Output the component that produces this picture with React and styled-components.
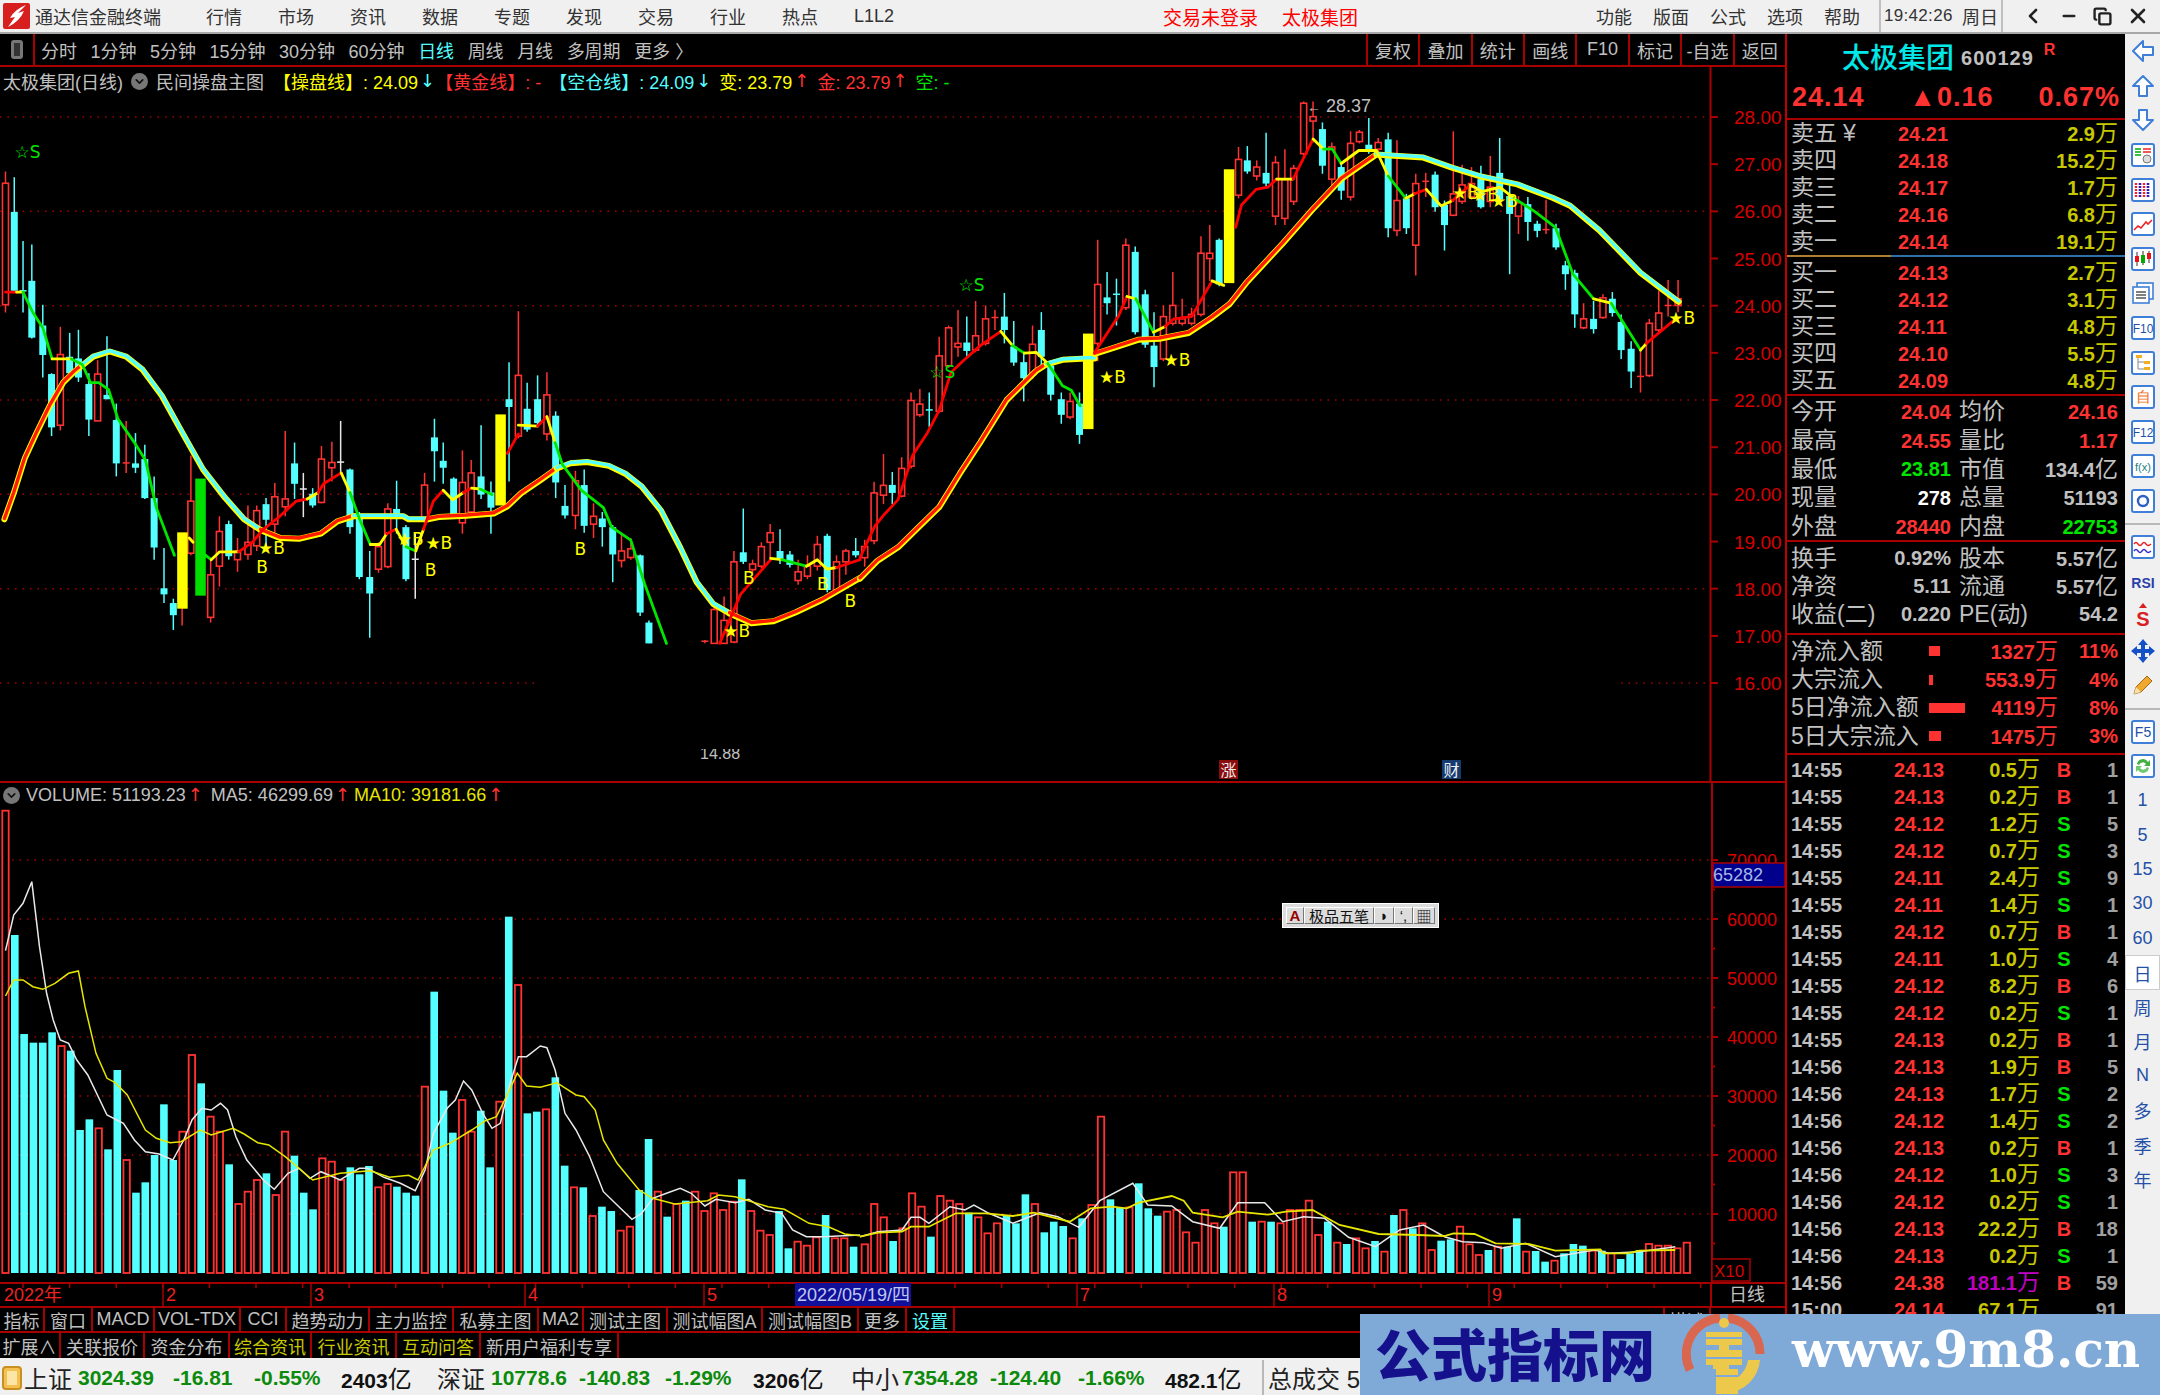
import React from "react";
import styled, { createGlobalStyle } from "styled-components";
import { ChevronLeft, Minus, Copy, X, ChevronDown } from "lucide-react";

const GlobalStyle = createGlobalStyle`
  html, body { margin: 0; padding: 0; background: #000; overflow: hidden; }
`;

const SANS = `"Liberation Sans", "Noto Sans CJK SC", sans-serif`;
const RED = "#ff3232";
const CYAN = "#54ffff";
const LINE = "#a80000";
const YEL = "#ffff00";
const GRN = "#00e600";

// traced from the chart, [x, colour, body top, body bottom, wick top, wick bottom]
const candlesA = [
  [10,"r",192,472,165,490],[26,"c",258,440,178,445],[42,"c",440,446,325,490],[58,"c",417,548,333,550],[78,"c",520,588,472,640],
  [94,"c",632,755,630,775],[110,"r",587,750,523,762],[127,"c",592,630,537,630],[143,"c",596,640,530,650],[162,"c",655,737,630,775],
  [178,"r",632,740,600,740],[195,"c",680,690,545,690],[212,"c",738,838,700,868],[230,"r",837,840,740,860],[247,"c",838,848,768,860],
  [264,"c",828,918,795,920],[281,"c",918,1032,868,1060],[299,"c",1126,1140,1033,1160],[316,"c",1160,1188,1150,1222],[332,"r",1020,1170,1000,1212],
  [348,"r",925,1045,820,1050],[384,"r",1095,1193,1060,1205],[400,"r",995,1075,960,1122],[417,"c",978,1052,970,1060],[433,"r",1040,1060,1010,1088],
  [452,"r",1020,1048,935,1060],[468,"r",947,1028,935,1040],[485,"c",932,968,918,1028],[501,"r",915,978,883,1000],[520,"r",920,938,763,960],
  [537,"c",838,885,790,920],[553,"w",897,899,860,962],[570,"c",908,935,895,940],[586,"r",828,928,798,930],[605,"r",836,848,788,880],
  [621,"w",835,837,740,860],[638,"c",852,985,850,1000],[655,"c",958,1100,950,1105],[674,"c",1100,1138,1040,1240],[690,"r",1030,1082,1020,1090],
  [707,"r",943,1076,930,1080],[723,"c",943,960,878,1000],[740,"c",985,1105,980,1110],[757,"w",1059,1061,1000,1150],[774,"r",888,968,860,980],
  [792,"c",778,810,735,880],[808,"c",832,848,790,885],[827,"c",873,955,870,960],[843,"r",882,975,808,1000],[859,"r",860,950,830,960],
  [877,"c",868,910,750,920],[895,"c",905,940,880,1000],[928,"c",690,708,605,880],[945,"r",635,775,487,780],[961,"c",712,760,652,765],
  [980,"c",690,745,635,750],[997,"r",680,770,628,785],[1013,"c",728,882,718,918],[1030,"c",936,958,888,965],[1049,"r",878,958,855,990],
  [1065,"c",888,982,852,998],[1082,"r",960,978,930,1010],[1098,"c",965,985,950,1030],[1117,"c",985,1048,980,1112],[1133,"r",1040,1062,1000,1078],
  [1150,"r",1035,1055,1010,1060],[1167,"c",1050,1182,1048,1190],[1183,"c",1205,1253,1200,1253],[1285,"r",1248,1253,1245,1253],[1302,"r",1175,1253,1170,1253],
  [1320,"r",1200,1253,1145,1253],[1338,"r",1065,1250,1040,1253],[1355,"c",1043,1065,942,1070],[1372,"r",1070,1083,1060,1090],[1388,"r",1030,1075,1020,1080],
  [1404,"r",998,1020,978,1060],[1422,"c",1040,1060,990,1070],[1440,"c",1048,1072,1040,1078],[1455,"r",1088,1108,1060,1118],[1472,"r",1075,1098,1050,1105],
  [1490,"r",1025,1075,1005,1085],[1508,"c",1005,1130,1000,1135],[1525,"r",1065,1130,1050,1140],[1542,"r",1040,1065,1035,1095],[1560,"c",1040,1050,1010,1055],
];

const candlesB = [
  [8,"r",1045,1070,1030,1090],[24,"r",925,1032,900,1040],[40,"r",908,930,838,950],[55,"c",907,925,878,950],[71,"r",870,932,845,935],
  [87,"r",718,865,700,870],[102,"r",726,750,692,755],[118,"c",739,741,700,778],[135,"r",618,742,575,745],[151,"r",555,640,550,645],
  [167,"r",590,598,515,620],[182,"c",588,607,530,620],[197,"r",573,605,495,610],[214,"r",535,590,505,595],[230,"r",532,535,515,560],
  [246,"c",530,560,477,590],[262,"c",597,633,540,640],[279,"c",632,668,610,720],[294,"r",592,660,550,670],[309,"c",560,620,520,650],
  [325,"c",640,705,630,718],[343,"c",715,750,700,770],[358,"r",720,755,700,760],[374,"c",725,795,700,815],[405,"r",458,590,358,630],
  [421,"c",487,500,430,525],[437,"c",480,485,445,550],[453,"r",370,510,355,515],[469,"c",385,565,373,570],[486,"c",480,593,470,600],
  [501,"c",595,643,520,688],[517,"r",530,625,505,630],[533,"r",505,545,430,550],[549,"r",535,545,490,550],[565,"r",525,545,510,550],
  [581,"r",388,525,350,530],[596,"r",388,400,325,450],[612,"c",358,458,355,462],[645,"r",178,258,150,265],[660,"c",180,205,148,210],
  [676,"r",195,215,180,225],[692,"c",208,232,118,240],[708,"r",185,305,170,325],[724,"r",223,310,155,325],[739,"r",198,272,190,280],
  [756,"r",52,165,48,170],[772,"r",82,92,48,140],[788,"c",110,192,95,210],[804,"r",150,222,140,235],[820,"c",195,248,185,268],
  [836,"r",142,262,115,270],[851,"r",117,138,112,142],[867,"c",145,155,85,165],[883,"r",140,155,130,165],[900,"c",133,332,118,352],
  [915,"r",270,337,135,350],[931,"c",265,332,255,345],[947,"r",232,370,210,438],[964,"r",227,229,208,262],[980,"c",212,285,205,295],
  [996,"c",280,325,270,382],[1011,"r",255,303,115,305],[1026,"r",235,272,190,278],[1042,"r",232,262,195,268],[1058,"c",222,285,192,288],
  [1074,"r",240,272,170,285],[1090,"c",208,268,130,272],[1107,"c",260,300,235,435],[1122,"r",275,305,260,345],[1138,"c",278,318,262,360],
  [1154,"c",322,338,315,352],[1169,"r",335,340,268,345],[1186,"c",332,375,322,380],[1202,"c",415,435,405,470],[1218,"c",432,525,425,555],
  [1233,"r",535,555,500,558],[1250,"c",535,558,495,568],[1266,"r",488,532,480,535],[1282,"c",490,522,475,530],[1297,"c",542,605,525,625],
  [1314,"c",602,653,585,690],[1330,"r",664,666,600,700],[1345,"r",545,662,535,665],[1361,"r",522,560,472,565],[1377,"r",505,507,448,530],
  [1394,"r",490,505,448,520],
];

const ax = (x) => x / 1.823;
const ay = (y) => 100 + y / 2.306;
const bx = (x) => 860 + x / 1.704;
const by = (y) => 80 + y / 2.24;
const priceY = (p) => 117 + (28 - p) * 47.17;

const slowA = [
  ["r",[8,965],[25,905],[45,825],[65,770],[90,705],[115,650],[135,625],[150,610]],
  ["c",[150,610],[170,590],[200,578],[230,590],[260,620],[295,680],[330,760],[370,850],[410,915],[445,965],[475,990]],
  ["r",[475,990],[510,1008],[545,1010],[585,998],[615,970],[645,958]],
  ["c",[645,958],[735,958],[745,965],[780,965]],
  ["r",[780,965],[800,960],[850,957],[900,952],[925,935],[950,905],[985,875],[1015,848]],
  ["c",[1015,848],[1040,836],[1070,833],[1110,842],[1140,860],[1170,890],[1205,945],[1240,1030],[1270,1110],[1300,1160],[1330,1182]],
  ["r",[1330,1182],[1370,1205],[1410,1200],[1450,1180],[1500,1150],[1568,1100]],
];
const slowB = [
  ["r",[0,1115],[30,1075],[65,1045],[100,1000],[135,955],[170,880],[205,810],[250,715],[300,650],[318,635]],
  ["c",[318,635],[345,625],[385,622],[400,622]],
  ["r",[400,612],[440,595],[475,580],[510,578],[560,565],[600,530],[630,500],[660,450],[720,365],[770,290],[820,220],[880,165]],
  ["c",[880,165],[910,168],[960,172],[1010,195],[1060,215],[1120,232],[1180,262],[1210,280],[1260,335],[1330,430],[1395,495]],
];
const thinA = [
  ["r",[10,443],[30,443]],["y",[30,443],[42,443]],
  ["g",[42,443],[60,490],[78,525],[95,597]],["y",[95,597],[130,597]],
  ["g",[130,597],[150,610],[165,652],[180,652],[198,668],[215,735],[245,790],[265,830],[285,940],[318,1050]],
  ["y",[345,1010],[352,1020]],["g",[375,1050],[385,1060]],["y",[385,1060],[400,1042],[435,1042]],
  ["r",[435,1042],[460,1020],[480,990],[510,960],[540,925],[560,920]],["y",[560,920],[580,905]],
  ["r",[580,905],[590,885],[622,860]],["y",[622,860],[638,905]],["g",[638,905],[655,965],[675,1025]],
  ["y",[675,1025],[692,1025],[705,1000]],["r",[705,1000],[722,990]],["y",[722,990],[740,1030]],
  ["g",[740,1030],[758,1040]],["y",[758,1040],[772,990]],["r",[772,990],[790,925],[808,900]],
  ["y",[808,900],[825,922],[845,905]],["r",[845,905],[860,895]],["y",[860,895],[875,897]],["g",[875,897],[897,910]],
  ["r",[925,815],[945,770]],["y",[945,750],[980,752]],["r",[980,752],[997,730]],["y",[997,730],[1012,790]],
  ["g",[1012,790],[1025,840],[1060,900],[1100,940],[1115,985],[1150,1015],[1175,1115],[1215,1253]],
  ["r",[1312,1253],[1350,1140],[1405,1060]],["y",[1405,1057],[1425,1060]],["g",[1425,1060],[1470,1075]],
  ["y",[1470,1075],[1490,1060],[1508,1082],[1525,1078]],["r",[1525,1078],[1568,1060]],
];
const thinB = [
  ["r",[0,1070],[25,1000],[40,975],[65,940],[90,840],[115,790],[135,740],[155,655],[175,630],[205,595],[240,563]],
  ["y",[240,563],[260,595]],["g",[260,595],[280,612]],["y",[280,612],[300,610],[320,635]],
  ["g",[320,635],[345,685],[360,695],[375,730]],["r",[400,610],[440,530],[455,485]],["y",[455,485],[470,490]],
  ["g",[470,490],[500,565]],["y",[500,565],[520,552]],["r",[520,552],[535,535],[565,530],[600,450]],["y",[600,450],[620,460]],
  ["r",[640,330],[650,280],[675,245],[695,240],[710,222]],["y",[710,222],[738,222]],["r",[738,222],[772,132]],
  ["y",[772,132],[790,155]],["g",[790,155],[805,155],[820,187]],["y",[820,187],[850,158],[880,158],[900,215]],
  ["g",[900,215],[930,265]],["y",[930,265],[945,255]],["r",[945,255],[965,245]],["y",[965,245],[990,282],[1010,270]],
  ["r",[1010,270],[1040,235]],["y",[1040,235],[1060,250],[1090,240],[1115,265]],
  ["g",[1115,265],[1150,295],[1185,330],[1215,435],[1250,490]],["y",[1250,490],[1280,500]],["g",[1280,500],[1330,605]],
  ["y",[1330,605],[1340,590]],["r",[1340,590],[1390,535]],
];
const lineColor = { r: "#ff0000", y: YEL, g: GRN, c: CYAN };

const toPts = (pts, fx, fy, dy = 0) => pts.map(([x, y]) => `${fx(x).toFixed(1)},${(fy(y) + dy).toFixed(1)}`).join(" ");

const stars = [
  [ax(50), ay(120), "☆S", GRN], [bx(190), by(460), "☆S", GRN], [bx(140), by(655), "☆S", GRN],
  [ax(495), ay(1032), "★B", YEL], [ax(748), ay(1012), "★B", YEL], [ax(800), ay(1022), "★B", YEL], [ax(1343), ay(1225), "★B", YEL],
  [bx(430), by(665), "★B", YEL], [bx(540), by(628), "★B", YEL], [bx(1400), by(532), "★B", YEL],
  [bx(1032), by(252), "★B", YEL], [bx(1066), by(258), "★B", YEL], [bx(1098), by(272), "★B", YEL],
  [ax(478), ay(1076), "B", YEL], [ax(785), ay(1083), "B", YEL], [ax(1058), ay(1035), "B", YEL],
  [ax(1365), ay(1103), "B", YEL], [ax(1500), ay(1115), "B", YEL], [ax(1550), ay(1155), "B", YEL],
];

const signalBars = [
  [ax(323), ay(997), ay(1173), YEL], [ax(356), ay(873), ay(1143), "#00e000"], [ax(903), ay(725), ay(935), YEL],
  [bx(380), by(568), by(782), YEL], [bx(620), by(200), by(455), YEL],
];

const volA = "r92 c465 c762 c788 c788 c757 r798 c812 c1050 c1018 r1045 c1108 c870 r1140 c1238 c1207 c1125 c973 c1140 r1055 r825 c910 r1010 r1055 c1153 r1272 r1235 r1200 c1180 r1245 r1055 c1127 c1238 c1288 r1135 r1145 r1200 c1162 c1183 c1158 r1222 r1212 c1220 c1238 c1247 r920 c635 c932 c1058 r960 r1055 c992 c1162 r965 c410 r615 c1000 c995 r988 c892 c1157 r1222 c1222 r1308 c1280 c1293 r1352 r1340 c1230 c1077 r1235 c1310 r1272 c1262 r1235 r1293 r1240 r1290 r1265 c1198 r1293 r1352 r1365 c1293 c1405 r1385 r1397 r1372 c1305 r1375 r1375 c1400".split(" ");
const volB = "r1393 r1272 r1312 c1383 r1345 r1240 r1280 c1370 r1248 r1262 r1272 c1298 r1312 r1360 r1330 c1305 c1330 c1243 r1272 c1357 c1325 c1338 r1375 c1315 r1275 r1010 c1258 c1282 r1282 c1210 c1285 c1307 r1295 r1290 r1357 r1388 r1290 r1330 c1340 r1177 r1177 c1325 r1325 c1325 r1330 r1290 r1290 r1262 r1365 c1325 r1388 c1392 r1375 r1405 c1383 r1415 c1305 r1290 c1345 r1330 r1410 c1382 c1378 r1340 r1393 r1425 c1410 r1400 c1400 c1315 r1415 c1413 c1445 r1442 c1420 c1392 c1397 r1412 c1412 r1420 c1437 c1420 c1410 r1392 r1397 r1397 r1405 r1388".split(" ");

const vy = (y) => 780 + y / 3;
const vxA = (x) => x / 1.823;
const vxB = (x) => 860 + x / 1.668;

const ma5A = [[10,512],[25,405],[42,370],[58,305],[72,500],[85,640],[97,720],[110,780],[125,790],[140,840],[160,885],[195,1005],[225,1030],[245,1080],[265,1115],[290,1122],[315,1140],[335,1080],[350,1020],[368,985],[385,990],[402,970],[415,990],[430,1070],[450,1140],[480,1200],[500,1228],[525,1180],[545,1165],[565,1195],[585,1175],[620,1200],[655,1165],[670,1165],[700,1192],[730,1210],[757,1232],[775,1170],[790,1060],[815,985],[830,960],[845,903],[860,930],[880,1000],[897,1045],[912,1030],[930,910],[945,830],[960,830],[985,798],[997,803],[1012,870],[1030,1000],[1050,1050],[1075,1130],[1100,1235],[1125,1275],[1152,1318],[1170,1300],[1190,1255],[1215,1240],[1240,1225],[1260,1240],[1285,1278],[1305,1258],[1340,1268],[1365,1258],[1395,1290],[1425,1300],[1445,1350],[1470,1370],[1500,1370],[1568,1365]];
const ma10A = [[10,648],[25,600],[42,600],[60,620],[78,628],[100,610],[125,580],[143,573],[155,680],[175,820],[195,895],[210,908],[232,945],[265,1050],[285,1075],[310,1088],[330,1085],[365,1050],[385,1065],[425,1045],[445,1062],[470,1088],[490,1095],[520,1130],[570,1200],[620,1180],[675,1172],[710,1192],[745,1186],[762,1200],[790,1110],[820,1090],[860,1050],[885,1022],[905,1010],[920,960],[943,880],[960,918],[985,922],[1015,908],[1050,945],[1065,950],[1085,990],[1100,1080],[1125,1150],[1165,1230],[1190,1255],[1230,1272],[1290,1262],[1310,1245],[1340,1250],[1400,1280],[1430,1288],[1475,1330],[1510,1340],[1540,1362],[1568,1367]];
const ma5B = [[0,1370],[30,1355],[70,1350],[85,1312],[100,1312],[115,1330],[150,1280],[175,1290],[190,1275],[215,1300],[255,1330],[300,1298],[330,1310],[365,1342],[400,1262],[455,1210],[480,1275],[520,1278],[555,1325],[600,1345],[630,1268],[675,1268],[705,1325],[740,1310],[775,1315],[815,1372],[860,1400],[900,1350],[940,1335],[975,1370],[1005,1385],[1040,1388],[1070,1405],[1110,1390],[1160,1430],[1225,1410],[1250,1420],[1300,1415],[1360,1400]];
const ma10B = [[0,1370],[30,1358],[70,1355],[85,1340],[115,1340],[160,1300],[210,1300],[255,1308],[290,1298],[350,1325],[385,1285],[420,1280],[445,1285],[465,1268],[520,1248],[540,1262],[555,1298],[605,1312],[630,1295],[680,1304],[710,1295],[755,1290],[800,1335],[865,1362],[930,1365],[975,1368],[990,1360],[1025,1362],[1060,1390],[1115,1392],[1160,1412],[1235,1408],[1240,1420],[1280,1420],[1300,1412],[1360,1410]];

const Root = styled.div`
  width: 2160px;
  height: 1395px;
  position: relative;
  overflow: hidden;
  display: flex;
  flex-direction: column;
  background: #000;
  font-family: ${SANS};
`;

/* title bar */
const TitleBar = styled.header`
  height: 34px;
  flex: none;
  box-sizing: border-box;
  display: flex;
  align-items: center;
  background: #f0f0f0;
  border-bottom: 2px solid #a8a8a8;
  color: #333;
  font-size: 18px;
`;
const AppName = styled.span`
  margin-left: 5px;
  width: 126px;
  white-space: nowrap;
`;
const MenuGroup = styled.nav`
  display: flex;
  align-items: center;
  margin-left: ${(p) => p.$ml}px;
  gap: ${(p) => p.$gap}px;
  white-space: nowrap;
`;
const AlertText = styled.span`
  color: #ff0000;
  font-size: 19px;
`;
const ClockBox = styled.div`
  margin-left: 19px;
  width: 124px;
  height: 32px;
  box-sizing: border-box;
  border-left: 2px solid #c0c0c0;
  border-right: 2px solid #c0c0c0;
  display: flex;
  align-items: center;
  justify-content: space-between;
  padding: 0 3px;
  white-space: nowrap;
`;
const Clock = styled.span`
  font-size: 17px;
  letter-spacing: 0.3px;
`;
const WindowControls = styled.div`
  flex: 1;
  display: flex;
  align-items: center;
  justify-content: space-around;
  padding: 0 2px 0 10px;
  color: #222;
`;

/* work area */
const Workspace = styled.div`
  flex: 1;
  min-height: 0;
  display: flex;
`;
const ChartColumn = styled.div`
  width: 1785px;
  flex: none;
  display: flex;
  flex-direction: column;
  background: #000;
`;
const Toolbar = styled.div`
  height: 33px;
  flex: none;
  box-sizing: border-box;
  display: flex;
  align-items: center;
  border-bottom: 2px solid ${LINE};
  color: #c0c0c0;
  font-size: 18px;
`;
const PaneButton = styled.div`
  width: 35px;
  height: 100%;
  flex: none;
  box-sizing: border-box;
  display: flex;
  align-items: center;
  justify-content: center;
  border-right: 2px solid ${LINE};
`;
const Toggle = styled.span`
  display: block;
  width: 12px;
  height: 19px;
  box-sizing: border-box;
  border: 3px solid #777;
  border-radius: 3px;
  background: #333;
`;
const PeriodList = styled.div`
  display: flex;
  gap: 13.5px;
  margin-left: 6px;
  white-space: nowrap;
`;
const Period = styled.span`
  color: ${(p) => (p.$active ? CYAN : "#c0c0c0")};
`;
const ToolTabs = styled.div`
  margin-left: auto;
  display: flex;
  height: 100%;
`;
const ToolTab = styled.span`
  width: 52.4px;
  box-sizing: border-box;
  border-left: 2px solid ${LINE};
  display: flex;
  align-items: center;
  justify-content: center;
  white-space: nowrap;
`;

const MainPane = styled.section`
  position: relative;
  height: 714px;
  flex: none;
`;
const ChartSvg = styled.svg`
  display: block;
  font-family: ${SANS};
`;
const LegendBar = styled.div`
  position: absolute;
  left: 3px;
  top: ${(p) => p.$top}px;
  display: flex;
  align-items: center;
  height: 24px;
  font-size: 18px;
  color: #c0c0c0;
  white-space: nowrap;
`;
const LegendText = styled.span`
  color: ${(p) => p.$c || "#c0c0c0"};
  margin-left: ${(p) => p.$ml || 0}px;
`;
const LegendArrow = styled.span`
  color: ${(p) => p.$c};
  font-family: "DejaVu Sans", sans-serif;
  font-size: 18px;
  line-height: 1;
  margin: 0 ${(p) => p.$mr || 0}px 0 2px;
`;
const CircleDrop = styled.span`
  width: 17px;
  height: 17px;
  margin: 0 ${(p) => p.$mr}px 0 ${(p) => p.$ml}px;
  border-radius: 50%;
  background: #777;
  color: #111;
  display: inline-flex;
  align-items: center;
  justify-content: center;
`;
const VolumePane = styled.section`
  position: relative;
  height: 501px;
  box-sizing: border-box;
  flex: none;
  border-top: 2px solid ${LINE};
`;
const ImeBar = styled.div`
  position: absolute;
  left: 1282px;
  top: 120px;
  width: 157px;
  height: 25px;
  box-sizing: border-box;
  padding: 3px;
  display: flex;
  background: #dcdcdc;
  border: 1px solid #fff;
  color: #111;
  font-size: 15px;
`;
const ImeKey = styled.span`
  width: ${(p) => p.$w}px;
  display: flex;
  align-items: center;
  justify-content: center;
  box-sizing: border-box;
  border: 1px solid;
  border-color: #fff #777 #777 #fff;
  color: ${(p) => p.$c || "#111"};
  white-space: nowrap;
`;

const TabRow = styled.div`
  height: ${(p) => p.$h}px;
  flex: none;
  box-sizing: border-box;
  display: flex;
  border-top: 2px solid ${LINE};
  font-size: 18px;
`;
const TabCell = styled.span`
  width: ${(p) => p.$w}px;
  flex: none;
  box-sizing: border-box;
  border-right: 2px solid ${LINE};
  display: flex;
  align-items: center;
  justify-content: center;
  white-space: nowrap;
  color: ${(p) => p.$c || "#c0c0c0"};
  margin-left: ${(p) => p.$ml || 0}px;
  ${(p) => p.$left && `border-left: 2px solid ${LINE};`}
`;

/* quote panel */
const SidePanel = styled.aside`
  width: 340px;
  flex: none;
  box-sizing: border-box;
  border-left: 2px solid #c00000;
  background: #000;
  overflow: hidden;
  display: flex;
  flex-direction: column;
  color: #c0c0c0;
`;
const StockHead = styled.div`
  height: 44px;
  flex: none;
  display: flex;
  align-items: center;
  padding-left: 55px;
  position: relative;
`;
const StockName = styled.span`
  color: #00e8e8;
  font-size: 28px;
  font-weight: 500;
`;
const StockCode = styled.span`
  margin-left: 7px;
  margin-top: 5px;
  font-size: 20px;
  font-weight: 700;
  letter-spacing: 1px;
`;
const RMark = styled.span`
  margin: -12px 0 0 10px;
  color: ${RED};
  font-size: 16px;
  font-weight: 700;
`;
const QuoteLine = styled.div`
  height: 42px;
  flex: none;
  box-sizing: border-box;
  border-bottom: 2px solid ${LINE};
  display: flex;
  align-items: center;
  justify-content: space-between;
  padding: 0 5px 2px 5px;
  color: ${RED};
  font-weight: 700;
  font-size: 27px;
  letter-spacing: 1px;
`;
const Block = styled.div`
  height: ${(p) => p.$h}px;
  flex: none;
  box-sizing: border-box;
  padding: ${(p) => p.$pt || 0}px 7px 0 4px;
  border-bottom: ${(p) => (p.$open ? "0" : `2px solid ${LINE}`)};
`;
const SplitLine = styled.div`
  height: 2px;
  flex: none;
  background: linear-gradient(to right, #b08030 0, #b08030 104px, #3070a8 104px);
`;
const BookRow = styled.div`
  height: 27px;
  display: grid;
  grid-template-columns: 107px 1fr auto;
  align-items: center;
`;
const Label = styled.span`
  font-size: 23px;
  line-height: 1;
  white-space: nowrap;
  color: #c0c0c0;
`;
const YuanMark = styled.span`
  margin-left: 6px;
`;
const Num = styled.span`
  font-size: 20px;
  font-weight: 700;
  line-height: 1;
  color: ${(p) => p.$c || "#c0c0c0"};
  text-align: ${(p) => p.$align || "left"};
  white-space: nowrap;
`;
const Unit = styled.span`
  font-size: 23px;
  font-weight: 400;
`;
const StatRow = styled.div`
  height: ${(p) => p.$h}px;
  display: grid;
  grid-template-columns: 160px 159px;
  column-gap: 8px;
  align-items: center;
`;
const StatCell = styled.div`
  display: flex;
  justify-content: space-between;
  align-items: center;
`;
const FlowRow = styled.div`
  height: 28.4px;
  display: grid;
  grid-template-columns: 138px 129px 60px;
  align-items: center;
`;
const FlowCell = styled.div`
  display: flex;
  align-items: center;
  justify-content: space-between;
`;
const FlowBar = styled.span`
  display: block;
  height: 10px;
  background: ${RED};
  width: ${(p) => p.$w}px;
`;
const TickList = styled.div`
  padding: 1px 7px 0 4px;
`;
const TickRow = styled.div`
  height: 27px;
  display: grid;
  grid-template-columns: 103px 60px 86px 48px 30px;
  align-items: center;
`;

/* tool rail */
const Rail = styled.aside`
  flex: 1;
  background: #f0f0f0;
  display: flex;
  flex-direction: column;
  align-items: center;
`;
const RailSlot = styled.div`
  height: ${(p) => p.$h}px;
  flex: none;
  width: 100%;
  display: flex;
  align-items: center;
  justify-content: center;
  color: #2450a8;
  font-size: 18px;
  ${(p) => p.$active && "background: #fff; outline: 1px solid #ccc; outline-offset: -1px;"}
`;
const RailRule = styled.div`
  height: 11.5px;
  flex: none;
  width: 100%;
  display: flex;
  align-items: center;
  &::after {
    content: "";
    display: block;
    width: 100%;
    height: 2px;
    background: #b8b8b8;
  }
`;

/* status bar */
const StatusBar = styled.footer`
  position: absolute;
  left: 0;
  right: 0;
  bottom: 0;
  height: 37px;
  box-sizing: border-box;
  padding-top: 2px;
  background: #f0f0f0;
  display: flex;
  align-items: center;
  white-space: nowrap;
  overflow: hidden;
`;
const IndexCell = styled.span`
  width: ${(p) => p.$w}px;
  flex: none;
  color: ${(p) => p.$c};
  font-size: ${(p) => (p.$cjk ? 24 : 21)}px;
  font-weight: ${(p) => (p.$cjk ? 400 : 700)};
  ${(p) => p.$rule && "border-left: 2px solid #b8b8b8; padding-left: 4px; box-sizing: border-box;"}
`;
const YiUnit = styled.span`
  font-size: 24px;
  font-weight: 400;
`;

/* watermark over the corner */
const Watermark = styled.div`
  position: absolute;
  left: 1360px;
  right: 0;
  bottom: 0;
  height: 81px;
  background: #7fa9d6;
  display: flex;
  align-items: center;
  white-space: nowrap;
`;
const MarkCn = styled.span`
  margin-left: 15px;
  width: 282px;
  color: #15108c;
  font-size: 56px;
  font-weight: 900;
  font-family: "Noto Sans CJK SC", sans-serif;
  line-height: 1;
  margin-top: -6px;
`;
const MarkLatin = styled.span`
  margin-left: 26px;
  color: #fff;
  font-size: 50px;
  font-weight: 700;
  font-family: "DejaVu Serif", serif;
  margin-top: -10px;
`;

const book = [
  ["卖五", "24.21", "2.9", "¥"], ["卖四", "24.18", "15.2"], ["卖三", "24.17", "1.7"], ["卖二", "24.16", "6.8"], ["卖一", "24.14", "19.1"],
];
const bids = [["买一", "24.13", "2.7"], ["买二", "24.12", "3.1"], ["买三", "24.11", "4.8"], ["买四", "24.10", "5.5"], ["买五", "24.09", "4.8"]];
const stats = [
  ["今开", "24.04", RED, "均价", "24.16", RED],
  ["最高", "24.55", RED, "量比", "1.17", RED],
  ["最低", "23.81", "#00e600", "市值", "134.4", "#c0c0c0", "亿"],
  ["现量", "278", "#fff", "总量", "51193", "#c0c0c0"],
  ["外盘", "28440", RED, "内盘", "22753", "#00e600"],
];
const stats2 = [
  ["换手", "0.92%", "#c0c0c0", "股本", "5.57", "#c0c0c0", "亿"],
  ["净资", "5.11", "#c0c0c0", "流通", "5.57", "#c0c0c0", "亿"],
  ["收益(二)", "0.220", "#c0c0c0", "PE(动)", "54.2", "#c0c0c0"],
];
const flows = [
  ["净流入额", 11, "1327", "11%"], ["大宗流入", 4, "553.9", "4%"], ["5日净流入额", 36, "4119", "8%"], ["5日大宗流入", 12, "1475", "3%"],
];
const ticks = [
  ["14:55","24.13","0.5","B","1"],["14:55","24.13","0.2","B","1"],["14:55","24.12","1.2","S","5"],["14:55","24.12","0.7","S","3"],
  ["14:55","24.11","2.4","S","9"],["14:55","24.11","1.4","S","1"],["14:55","24.12","0.7","B","1"],["14:55","24.11","1.0","S","4"],
  ["14:55","24.12","8.2","B","6"],["14:55","24.12","0.2","S","1"],["14:55","24.13","0.2","B","1"],["14:56","24.13","1.9","B","5"],
  ["14:56","24.13","1.7","S","2"],["14:56","24.12","1.4","S","2"],["14:56","24.13","0.2","B","1"],["14:56","24.12","1.0","S","3"],
  ["14:56","24.12","0.2","S","1"],["14:56","24.13","22.2","B","18"],["14:56","24.13","0.2","S","1"],["14:56","24.38","181.1","B","59"],
  ["15:00","24.14","67.1","","91"],
];

const statusItems = [
  ["上证", 54, "#222", 1], ["3024.39", 95, "#0c8a0c"], ["-16.81", 81, "#0c8a0c"], ["-0.55%", 87, "#0c8a0c"], ["2403", 96, "#111", 0, 1],
  ["深证", 54, "#222", 1], ["10778.6", 88, "#0c8a0c"], ["-140.83", 86, "#0c8a0c"], ["-1.29%", 88, "#0c8a0c"], ["3206", 98, "#111", 0, 1],
  ["中小", 51, "#222", 1], ["7354.28", 88, "#0c8a0c"], ["-124.40", 88, "#0c8a0c"], ["-1.66%", 87, "#0c8a0c"], ["482.1", 97, "#111", 0, 1],
];

const tabs1 = [["指标",45],["窗口",48],["MACD",62],["VOL-TDX",86],["CCI",46],["趋势动力",83],["主力监控",84],["私募主图",85],["MA2",45],["测试主图",84],["测试幅图A",95],["测试幅图B",96],["更多",48],["设置",48,CYAN]];
const tabs2 = [["扩展∧",61],["关联报价",84],["资金分布",85],["综合资讯",82,"#c8c800"],["行业资讯",85,"#c8c800"],["互动问答",84,"#c8c800"],["新用户福利专享",138]];

const Box = ({ children }) => (
  <svg width="24" height="24" viewBox="0 0 24 24">
    <rect x="1" y="1" width="22" height="22" rx="2" fill="#fff" stroke="#3f7fd8" strokeWidth="2" />
    {children}
  </svg>
);
const Arrow = ({ rot }) => (
  <svg width="24" height="24" viewBox="0 0 24 24" style={{ transform: `rotate(${rot}deg)` }}>
    <path d="M12 2 L22 12 H16 V22 H8 V12 H2 Z" fill="#fff" stroke="#3f7fd8" strokeWidth="2" strokeLinejoin="round" />
  </svg>
);
const BoxLabel = ({ t, c = "#2450a8", s = 13 }) => (
  <text x="12" y="17" textAnchor="middle" fontSize={s} fill={c} fontFamily="Liberation Sans">{t}</text>
);

const railIcons = [
  <Arrow rot={-90} key="l" />, <Arrow rot={0} key="u" />, <Arrow rot={180} key="d" />,
  <Box key="a"><path d="M4 6h6M4 9h6M4 12h6" stroke="#0a0" strokeWidth="1.6" /><path d="M12 6h8M12 9h8" stroke="#e22" strokeWidth="1.6" /><circle cx="16" cy="16" r="4" fill="#ddd" stroke="#777" /></Box>,
  <Box key="b"><path d="M5 5v14M9 5v14M13 5v14M17 5v14" stroke="#e22" strokeWidth="2.4" strokeDasharray="2 1" /><path d="M17 5v14M9 5v14" stroke="#22c" strokeWidth="2.4" strokeDasharray="2 1" /></Box>,
  <Box key="c"><path d="M3 18l4-4 3 2 5-6 2 2 4-4" fill="none" stroke="#e22" strokeWidth="1.6" /></Box>,
  <Box key="k"><path d="M6 5v14M12 4v14M18 4v12" stroke="#333" /><rect x="4" y="9" width="4" height="6" fill="#e11" /><rect x="10" y="8" width="4" height="8" fill="#0a0" /><rect x="16" y="6" width="4" height="6" fill="#e11" /></Box>,
  <svg width="24" height="24" viewBox="0 0 24 24" key="w"><rect x="6" y="2" width="16" height="16" fill="#fff" stroke="#3f7fd8" strokeWidth="1.6" /><rect x="2" y="6" width="16" height="16" fill="#fff" stroke="#3f7fd8" strokeWidth="1.6" /><path d="M5 11h10M5 14h10M5 17h10" stroke="#555" strokeWidth="1.5" /></svg>,
  <Box key="f10"><BoxLabel t="F10" s={12} /></Box>,
  <Box key="t"><rect x="5" y="4" width="6" height="3" fill="#f0b020" /><rect x="13" y="10" width="6" height="3" fill="#f0b020" /><rect x="13" y="16" width="6" height="3" fill="#f0b020" /><path d="M7 7v11h6M7 11h6" fill="none" stroke="#888" /></Box>,
  <Box key="z"><BoxLabel t="自" c="#f07020" s={15} /></Box>,
  <Box key="f12"><BoxLabel t="F12" s={12} /></Box>,
  <Box key="fx"><BoxLabel t="f(x)" c="#1a7f80" s={11} /></Box>,
  <Box key="o"><circle cx="12" cy="12" r="5" fill="none" stroke="#3060c0" strokeWidth="2.4" /></Box>,
];
const railIcons2 = [
  <Box key="wave"><path d="M3 9q2-3 4 0t4 0 4 0 5 0" fill="none" stroke="#e22" strokeWidth="1.4" /><path d="M3 16q2-3 4 0t4 0 4 0 5 0" fill="none" stroke="#33c" strokeWidth="1.4" /></Box>,
  <svg width="34" height="20" viewBox="0 0 34 20" key="rsi"><text x="17" y="16" textAnchor="middle" fontSize="14" fontWeight="700" fill="#2a3fa8" fontFamily="Liberation Sans">RSI</text></svg>,
  <svg width="24" height="30" viewBox="0 0 24 30" key="s"><text x="12" y="25" textAnchor="middle" fontSize="20" fontWeight="700" fill="#d82020" fontFamily="Liberation Sans">S</text><path d="M12 2l4 5h-8z" fill="#d82020" /></svg>,
  <svg width="26" height="26" viewBox="0 0 26 26" key="m"><path d="M13 1l5 6h-3v4h4V8l6 5-6 5v-3h-4v4h3l-5 6-5-6h3v-4H7v3l-6-5 6-5v3h4V7H8z" fill="#1450c8" /></svg>,
  <svg width="24" height="24" viewBox="0 0 24 24" key="p"><path d="M3 21l2-7L16 3l5 5-11 11z" fill="#f0a830" stroke="#a06a10" /><path d="M3 21l2-7 5 5z" fill="#f8e0b0" /></svg>,
];
const railIcons3 = [
  <Box key="f5"><BoxLabel t="F5" s={14} /></Box>,
  <Box key="r"><path d="M6 10a6 6 0 0 1 11-2l2-2v6h-6l2-2a4 4 0 0 0-7 1z" fill="#40b040" /><path d="M18 14a6 6 0 0 1-11 2l-2 2v-6h6l-2 2a4 4 0 0 0 7-1z" fill="#70c870" /></Box>,
];
const railText = ["1", "5", "15", "30", "60", "日", "周", "月", "N", "多", "季", "年"];

function CandleSet({ data, fx, fy }) {
  return data.map(([x, c, top, bot, hi, lo]) => {
    const cx = fx(x);
    const color = c === "r" ? RED : c === "c" ? CYAN : "#e8e8e8";
    const t = fy(top);
    const b = fy(bot);
    const flat = b - t < 3;
    return (
      <g key={`${x}-${top}`}>
        <line x1={cx} x2={cx} y1={fy(hi)} y2={fy(lo)} stroke={color} strokeWidth="1.5" />
        {flat ? (
          <line x1={cx - 3.5} x2={cx + 3.5} y1={t} y2={t} stroke={color} strokeWidth="1.5" />
        ) : c === "r" ? (
          <rect x={cx - 3} y={t} width={6} height={b - t} fill="#000" stroke={color} strokeWidth="1.6" />
        ) : (
          <rect x={cx - 3.5} y={t} width={7} height={b - t} fill={color} />
        )}
      </g>
    );
  });
}

function SlowLine({ data, fx, fy }) {
  return data.map(([c, ...pts], i) => (
    <g key={i} fill="none" strokeLinejoin="round" strokeLinecap="round">
      <polyline points={toPts(pts, fx, fy, 0.8)} stroke={YEL} strokeWidth="6" />
      <polyline points={toPts(pts, fx, fy, 0)} stroke={c === "r" ? "#ff1a00" : CYAN} strokeWidth="3.4" />
    </g>
  ));
}

function ThinLine({ data, fx, fy }) {
  return data.map(([c, ...pts], i) => (
    <polyline key={i} points={toPts(pts, fx, fy)} fill="none" stroke={lineColor[c]} strokeWidth="2.8" strokeLinecap="round" strokeLinejoin="round" />
  ));
}

function PriceChart() {
  const prices = [28, 27, 26, 25, 24, 23, 22, 21, 20, 19, 18, 17, 16];
  return (
    <ChartSvg width="1785" height="714" viewBox="0 67 1785 714">
      <defs>
        <clipPath id="lowClip"><rect x="680" y="749" width="90" height="20" /></clipPath>
      </defs>
      {prices.filter((p) => p % 2 === 0 && p > 16).map((p) => (
        <line key={p} x1="0" x2="1710" y1={priceY(p)} y2={priceY(p)} stroke="#a00000" strokeWidth="1.5" strokeDasharray="1.5 6" />
      ))}
      <line x1="0" x2="537" y1={priceY(16)} y2={priceY(16)} stroke="#a00000" strokeWidth="1.5" strokeDasharray="1.5 6" />
      <line x1="1621" x2="1710" y1={priceY(16)} y2={priceY(16)} stroke="#a00000" strokeWidth="1.5" strokeDasharray="1.5 6" />
      <line x1="1710.5" x2="1710.5" y1="67" y2="781" stroke={LINE} strokeWidth="2" />
      {prices.map((p) => (
        <g key={p}>
          <line x1="1710" x2="1718" y1={priceY(p)} y2={priceY(p)} stroke={LINE} strokeWidth="2" />
          <text x="1734" y={priceY(p) + 7} fontSize="19" fill="#d80000">{p}.00</text>
        </g>
      ))}
      <CandleSet data={candlesA} fx={ax} fy={ay} />
      <CandleSet data={candlesB} fx={bx} fy={by} />
      {signalBars.map(([x, t, b, c]) => (
        <rect key={x} x={x} y={t} width="10.5" height={b - t} fill={c} />
      ))}
      <SlowLine data={slowA} fx={ax} fy={ay} />
      <SlowLine data={slowB} fx={bx} fy={by} />
      <ThinLine data={thinA} fx={ax} fy={ay} />
      <ThinLine data={thinB} fx={bx} fy={by} />
      {stars.map(([x, y, t, c]) => (
        <text key={`${x}-${y}`} x={x} y={y + 6} textAnchor="middle" fontSize="17" fill={c} fontFamily="DejaVu Sans">{t}</text>
      ))}
      <text x="1307" y="112" fontSize="14" fill="#c0c0c0">←</text>
      <text x="1326" y="112" fontSize="18" fill="#c0c0c0">28.37</text>
      <text x="700" y="759" fontSize="16" fill="#c0c0c0" clipPath="url(#lowClip)">14.88</text>
      <rect x="1219" y="760" width="19" height="19" fill="#8a0c0c" />
      <text x="1228.5" y="776" textAnchor="middle" fontSize="16" fill="#eee">涨</text>
      <rect x="1442" y="760" width="19" height="19" fill="#143a70" />
      <text x="1451.5" y="776" textAnchor="middle" fontSize="16" fill="#eee">财</text>
    </ChartSvg>
  );
}

function VolumeBars({ data, fx, step, start }) {
  return data.map((v, i) => {
    const x = fx(start + step * i);
    const top = vy(Number(v.slice(1)));
    return v[0] === "r" ? (
      <rect key={i} x={x - 3.2} y={top} width="6.4" height={1273 - top} fill="#000" stroke={RED} strokeWidth="1.8" />
    ) : (
      <rect key={i} x={x - 3.8} y={top} width="7.6" height={1273 - top} fill={CYAN} />
    );
  });
}

function VolumeChart() {
  const levels = [70000, 60000, 50000, 40000, 30000, 20000, 10000];
  const ly = (v) => 1273 - (v / 10000) * 59;
  return (
    <ChartSvg width="1785" height="499" viewBox="0 783 1785 499">
      {levels.map((v) => (
        <g key={v}>
          <line x1="12" x2="1710" y1={ly(v)} y2={ly(v)} stroke="#a00000" strokeWidth="1.5" strokeDasharray="1.5 6" />
          <line x1="1711" x2="1718" y1={ly(v)} y2={ly(v)} stroke={LINE} strokeWidth="2" />
          <text x="1727" y={ly(v) + 7} fontSize="18" fill="#d80000">{v}</text>
          <line x1="1711" x2="1715" y1={ly(v) + 29.5} y2={ly(v) + 29.5} stroke={LINE} strokeWidth="2" />
        </g>
      ))}
      <VolumeBars data={volA} fx={vxA} start={10} step={16.99} />
      <VolumeBars data={volB} fx={vxB} start={8} step={15.76} />
      <polyline points={toPts(ma5A, vxA, vy)} fill="none" stroke="#e8e8e8" strokeWidth="1.5" />
      <polyline points={toPts(ma10A, vxA, vy)} fill="none" stroke="#e6e600" strokeWidth="1.5" />
      <polyline points={toPts(ma5B, vxB, vy)} fill="none" stroke="#e8e8e8" strokeWidth="1.5" />
      <polyline points={toPts(ma10B, vxB, vy)} fill="none" stroke="#e6e600" strokeWidth="1.8" />
      <rect x="1711" y="783" width="2" height="499" fill={LINE} />
      <rect x="1713" y="863" width="72" height="24" fill="#00008c" stroke={LINE} strokeWidth="1.5" />
      <text x="1713" y="881" fontSize="18" fill="#a8b8e8">65282</text>
      <rect x="1712" y="1259" width="38" height="22" fill="#000" stroke={LINE} strokeWidth="1.5" />
      <text x="1714" y="1277" fontSize="17" fill="#d80000">X10</text>
    </ChartSvg>
  );
}

function TimeAxis() {
  const marks = [[163, "2"], [311, "3"], [525, "4"], [704, "5"], [1077, "7"], [1274, "8"], [1489, "9"]];
  const minor = Array.from({ length: 37 }, (_, i) => 23 + i * 46.6);
  return (
    <ChartSvg width="1785" height="24" viewBox="0 1282 1785 24">
      <rect x="0" y="1282" width="1785" height="2" fill={LINE} />
      {minor.map((x) => (
        <line key={x} x1={x} x2={x} y1="1283" y2="1288" stroke={LINE} strokeWidth="1.5" />
      ))}
      <text x="4" y="1301" fontSize="18" fill="#f02020">2022年</text>
      {marks.map(([x, t]) => (
        <g key={t}>
          <line x1={x} x2={x} y1="1283" y2="1306" stroke={LINE} strokeWidth="1.5" />
          <text x={x + 3} y="1301" fontSize="18" fill="#f02020">{t}</text>
        </g>
      ))}
      <rect x="795" y="1283" width="116" height="23" fill="#10109a" />
      <text x="797" y="1301" fontSize="18" fill="#c0c8f0">2022/05/19/四</text>
      <rect x="1710" y="1282" width="2" height="24" fill={LINE} />
      <text x="1729" y="1301" fontSize="18" fill="#c0c0c0">日线</text>
    </ChartSvg>
  );
}

export default function App() {
  return (
    <Root>
      <GlobalStyle />
      <TitleBar>
        <svg width="27" height="26" viewBox="0 0 27 26" style={{ marginLeft: 3, flex: "none" }}>
          <rect width="27" height="26" rx="2" fill="#d81f1f" />
          <path d="M23 2 Q12 6 7 15 L12 14 L5 24 Q17 18 21 8 L15 10 Z" fill="#fff" />
        </svg>
        <AppName>通达信金融终端</AppName>
        <MenuGroup $ml={45} $gap={36}>
          {["行情", "市场", "资讯", "数据", "专题", "发现", "交易", "行业", "热点", "L1L2"].map((m) => (
            <span key={m}>{m}</span>
          ))}
        </MenuGroup>
        <MenuGroup $ml={269} $gap={24}>
          <AlertText>交易未登录</AlertText>
          <AlertText>太极集团</AlertText>
        </MenuGroup>
        <MenuGroup $ml={238} $gap={21}>
          {["功能", "版面", "公式", "选项", "帮助"].map((m) => (
            <span key={m}>{m}</span>
          ))}
        </MenuGroup>
        <ClockBox>
          <Clock>19:42:26</Clock>
          <span>周日</span>
        </ClockBox>
        <WindowControls>
          <ChevronLeft size={24} strokeWidth={2.6} />
          <Minus size={18} strokeWidth={3.4} />
          <Copy size={19} strokeWidth={3} />
          <X size={24} strokeWidth={2.6} />
        </WindowControls>
      </TitleBar>

      <Workspace>
        <ChartColumn>
          <Toolbar>
            <PaneButton><Toggle /></PaneButton>
            <PeriodList>
              {["分时", "1分钟", "5分钟", "15分钟", "30分钟", "60分钟"].map((p) => (
                <Period key={p}>{p}</Period>
              ))}
              <Period $active>日线</Period>
              {["周线", "月线", "多周期", "更多 〉"].map((p) => (
                <Period key={p}>{p}</Period>
              ))}
            </PeriodList>
            <ToolTabs>
              {["复权", "叠加", "统计", "画线", "F10", "标记", "-自选", "返回"].map((t) => (
                <ToolTab key={t}>{t}</ToolTab>
              ))}
            </ToolTabs>
          </Toolbar>

          <MainPane>
            <PriceChart />
            <LegendBar $top={2}>
              <LegendText>太极集团(日线)</LegendText>
              <CircleDrop $ml={8} $mr={8}><ChevronDown size={13} strokeWidth={3} /></CircleDrop>
              <LegendText>民间操盘主图</LegendText>
              <LegendText $c={YEL} $ml={9}>【操盘线】: 24.09</LegendText>
              <LegendArrow $c={CYAN}>↓</LegendArrow>
              <LegendText $c={RED} $ml={0}>【黄金线】: -</LegendText>
              <LegendText $c={CYAN} $ml={8}>【空仓线】: 24.09</LegendText>
              <LegendArrow $c={CYAN}>↓</LegendArrow>
              <LegendText $c={YEL} $ml={8}>变: 23.79</LegendText>
              <LegendArrow $c={RED}>↑</LegendArrow>
              <LegendText $c={RED} $ml={8}>金: 23.79</LegendText>
              <LegendArrow $c={RED}>↑</LegendArrow>
              <LegendText $c={GRN} $ml={8}>空: -</LegendText>
            </LegendBar>
          </MainPane>

          <VolumePane>
            <VolumeChart />
            <LegendBar $top={0}>
              <CircleDrop $ml={0} $mr={6}><ChevronDown size={13} strokeWidth={3} /></CircleDrop>
              <LegendText>VOLUME: 51193.23</LegendText>
              <LegendArrow $c={RED}>↑</LegendArrow>
              <LegendText $ml={8}>MA5: 46299.69</LegendText>
              <LegendArrow $c={RED}>↑</LegendArrow>
              <LegendText $c="#e6e600" $ml={4}>MA10: 39181.66</LegendText>
              <LegendArrow $c={RED}>↑</LegendArrow>
            </LegendBar>
            <ImeBar>
              <ImeKey $w={18} $c="#900"><b>A</b></ImeKey>
              <ImeKey $w={70}>极品五笔</ImeKey>
              <ImeKey $w={20}>◗</ImeKey>
              <ImeKey $w={19}>‘,</ImeKey>
              <ImeKey $w={22}>▦</ImeKey>
            </ImeBar>
          </VolumePane>

          <TimeAxis />
          <TabRow $h={25}>
            {tabs1.map(([t, w, c]) => (
              <TabCell key={t} $w={w} $c={c}>{t}</TabCell>
            ))}
            <TabCell $w={48} $ml={708} $left>描述</TabCell>
          </TabRow>
          <TabRow $h={27}>
            {tabs2.map(([t, w, c]) => (
              <TabCell key={t} $w={w} $c={c}>{t}</TabCell>
            ))}
          </TabRow>
        </ChartColumn>

        <SidePanel>
          <StockHead>
            <StockName>太极集团</StockName>
            <StockCode>600129</StockCode>
            <RMark>R</RMark>
          </StockHead>
          <QuoteLine>
            <span>24.14</span>
            <span>▲0.16</span>
            <span>0.67%</span>
          </QuoteLine>
          <Block $h={135} $open>
            {book.map(([l, p, v, y]) => (
              <BookRow key={l}>
                <Label>{l}{y && <YuanMark>{y}</YuanMark>}</Label>
                <Num $c={RED}>{p}</Num>
                <Num $c="#c8c800" $align="right">{v}<Unit>万</Unit></Num>
              </BookRow>
            ))}
          </Block>
          <SplitLine />
          <Block $h={139} $pt={2}>
            {bids.map(([l, p, v]) => (
              <BookRow key={l}>
                <Label>{l}</Label>
                <Num $c={RED}>{p}</Num>
                <Num $c="#c8c800" $align="right">{v}<Unit>万</Unit></Num>
              </BookRow>
            ))}
          </Block>
          <Block $h={146} $pt={1.5}>
            {stats.map(([a, b, bc, c, d, dc, u]) => (
              <StatRow key={a} $h={28.7}>
                <StatCell><Label>{a}</Label><Num $c={bc}>{b}</Num></StatCell>
                <StatCell><Label>{c}</Label><Num $c={dc}>{d}{u && <Unit>{u}</Unit>}</Num></StatCell>
              </StatRow>
            ))}
          </Block>
          <Block $h={93} $pt={2}>
            {stats2.map(([a, b, bc, c, d, dc, u]) => (
              <StatRow key={a} $h={28}>
                <StatCell><Label>{a}</Label><Num $c={bc}>{b}</Num></StatCell>
                <StatCell><Label>{c}</Label><Num $c={dc}>{d}{u && <Unit>{u}</Unit>}</Num></StatCell>
              </StatRow>
            ))}
          </Block>
          <Block $h={120} $pt={2}>
            {flows.map(([l, w, a, pct]) => (
              <FlowRow key={l}>
                <Label>{l}</Label>
                <FlowCell>
                  <FlowBar $w={w} />
                  <Num $c={RED} $align="right">{a}<Unit>万</Unit></Num>
                </FlowCell>
                <Num $c={RED} $align="right">{pct}</Num>
              </FlowRow>
            ))}
          </Block>
          <TickList>
            {ticks.map(([t, p, v, s, n], i) => (
              <TickRow key={i}>
                <Num>{t}</Num>
                <Num $c={RED}>{p}</Num>
                <Num $c={v === "181.1" ? "#c000c0" : "#c8c800"} $align="right">{v}<Unit>万</Unit></Num>
                <Num $c={s === "B" ? RED : "#00e600"} $align="center">{s}</Num>
                <Num $c="#a0a0a0" $align="right">{n}</Num>
              </TickRow>
            ))}
          </TickList>
        </SidePanel>

        <Rail>
          {railIcons.map((icon) => (
            <RailSlot key={icon.key} $h={34.6}>{icon}</RailSlot>
          ))}
          <RailRule />
          {railIcons2.map((icon) => (
            <RailSlot key={icon.key} $h={34.6}>{icon}</RailSlot>
          ))}
          <RailRule />
          {railIcons3.map((icon) => (
            <RailSlot key={icon.key} $h={34.6}>{icon}</RailSlot>
          ))}
          {railText.map((t) => (
            <RailSlot key={t} $h={34.4} $active={t === "日"}>{t}</RailSlot>
          ))}
        </Rail>
      </Workspace>

      <StatusBar>
        <svg width="20" height="24" viewBox="0 0 20 24" style={{ margin: "0 2px", flex: "none" }}>
          <rect x="1" y="1" width="18" height="22" rx="3" fill="#f4c050" stroke="#c89020" strokeWidth="2" />
          <rect x="5" y="5" width="10" height="14" fill="#fbe6a8" />
        </svg>
        {statusItems.map(([t, w, c, cjk, yi]) => (
          <IndexCell key={t} $w={w} $c={c} $cjk={cjk}>
            {t}{yi ? <YiUnit>亿</YiUnit> : null}
          </IndexCell>
        ))}
        <IndexCell $w={92} $c="#222" $cjk $rule>总成交 5</IndexCell>
      </StatusBar>

      <Watermark>
        <MarkCn>公式指标网</MarkCn>
        <svg width="84" height="81" viewBox="0 0 84 81" style={{ marginLeft: 25, flex: "none" }}>
          <path d="M8 56 A36 36 0 0 1 38 4 M46 4 A36 36 0 0 1 78 40" fill="none" stroke="#d9674f" strokeWidth="9" />
          <path d="M78 46 A36 36 0 0 1 44 79 L44 68 A26 26 0 0 0 66 46 Z" fill="#ecc94b" />
          <path d="M24 18h36v13H47v5h13v15H47v4h9v25H34V55h-3v-4h-7V36h13v-5H24z" fill="#ecc94b" />
          <path d="M24 24h36M24 44h36M34 62h22" stroke="#7fa9d6" strokeWidth="2" />
          <circle cx="42" cy="9" r="5" fill="#ecc94b" />
        </svg>
        <MarkLatin>www.9m8.cn</MarkLatin>
      </Watermark>
    </Root>
  );
}
